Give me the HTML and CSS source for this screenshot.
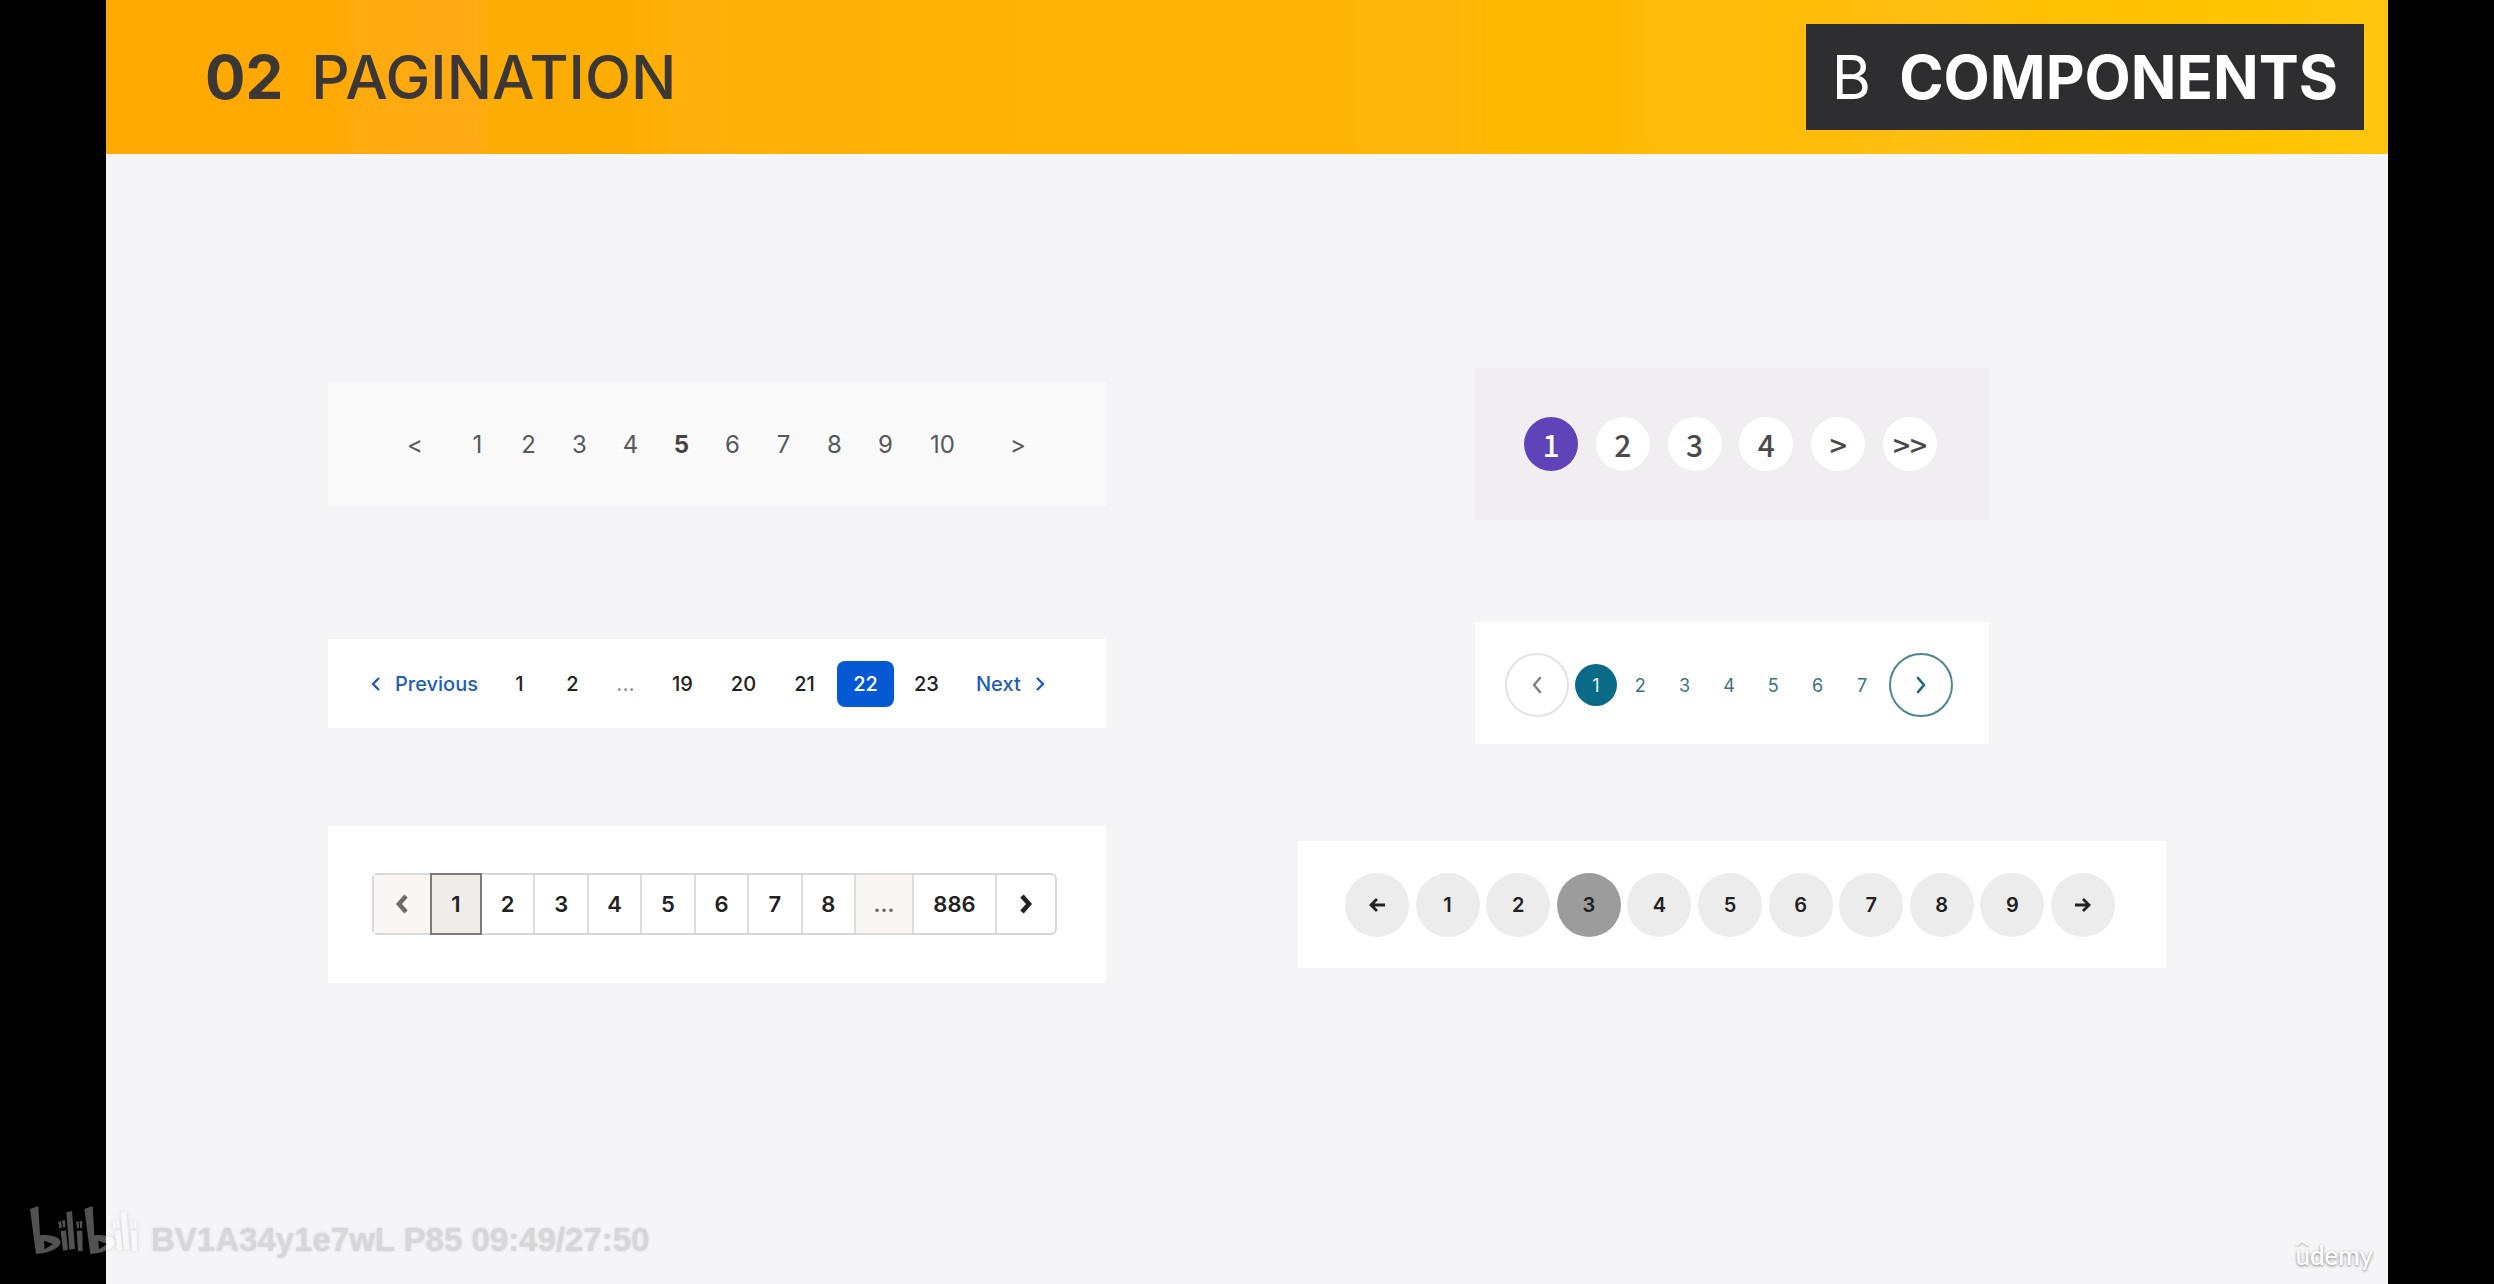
FILE: index.html
```html
<!DOCTYPE html>
<html lang="en">
<head>
<meta charset="utf-8">
<meta name="viewport" content="width=device-width, initial-scale=1">
<title>02 Pagination – Components</title>
<link rel="stylesheet" href="styles.css">
</head>
<body>
<div class="stage">
  <header class="banner">
    <h1 class="banner-title"><strong>02</strong><span>PAGINATION</span></h1>
    <p class="banner-badge"><span>B</span><strong>COMPONENTS</strong></p>
  </header>

  <main class="gallery">
    <nav class="panel plain" aria-label="Plain pagination">
      <a class="plain-arrow" href="#" aria-label="Previous">&lt;</a>
      <a href="#">1</a>
      <a href="#">2</a>
      <a href="#">3</a>
      <a href="#">4</a>
      <a class="current" href="#" aria-current="page">5</a>
      <a href="#">6</a>
      <a href="#">7</a>
      <a href="#">8</a>
      <a href="#">9</a>
      <a class="plain-wide" href="#">10</a>
      <a class="plain-arrow plain-next" href="#" aria-label="Next">&gt;</a>
    </nav>

    <nav class="panel narrow dots" aria-label="Dot pagination">
      <a class="current" href="#" aria-current="page">1</a>
      <a href="#">2</a>
      <a href="#">3</a>
      <a href="#">4</a>
      <a href="#" aria-label="Next">&gt;</a>
      <a href="#" aria-label="Last">&gt;&gt;</a>
    </nav>

    <nav class="panel labelled" aria-label="Labelled pagination">
      <a class="labelled-step" href="#"><svg class="chevron" viewBox="0 0 10 16" aria-hidden="true"><path d="M8 2 2 8l6 6"/></svg>Previous</a>
      <a href="#">1</a>
      <a href="#">2</a>
      <span class="labelled-more">...</span>
      <a class="labelled-two" href="#">19</a>
      <a class="labelled-two" href="#">20</a>
      <a class="labelled-two" href="#">21</a>
      <a class="labelled-two current" href="#" aria-current="page">22</a>
      <a class="labelled-two" href="#">23</a>
      <a class="labelled-step" href="#">Next<svg class="chevron" viewBox="0 0 10 16" aria-hidden="true"><path d="m2 2 6 6-6 6"/></svg></a>
    </nav>

    <nav class="panel narrow rings" aria-label="Ringed pagination">
      <a class="ring ring-off" href="#" aria-label="Previous"><svg viewBox="0 0 12 18" aria-hidden="true"><path d="M9 2 3 9l6 7"/></svg></a>
      <div class="rings-pages">
        <a class="current" href="#" aria-current="page">1</a>
        <a href="#">2</a>
        <a href="#">3</a>
        <a href="#">4</a>
        <a href="#">5</a>
        <a href="#">6</a>
        <a href="#">7</a>
      </div>
      <a class="ring" href="#" aria-label="Next"><svg viewBox="0 0 12 18" aria-hidden="true"><path d="m3 2 6 7-6 7"/></svg></a>
    </nav>

    <nav class="panel segmented" aria-label="Segmented pagination">
      <div class="segments">
        <a class="segment-off" href="#" aria-label="Previous"><svg viewBox="0 0 16 20" aria-hidden="true"><path d="m12 2-7 8 7 8"/></svg></a>
        <a class="current" href="#" aria-current="page">1</a>
        <a href="#">2</a>
        <a href="#">3</a>
        <a href="#">4</a>
        <a href="#">5</a>
        <a href="#">6</a>
        <a href="#">7</a>
        <a href="#">8</a>
        <span class="segment-off">...</span>
        <a href="#">886</a>
        <a href="#" aria-label="Next"><svg viewBox="0 0 16 20" aria-hidden="true"><path d="m4 2 7 8-7 8"/></svg></a>
      </div>
    </nav>

    <nav class="panel discs" aria-label="Disc pagination">
      <a href="#" aria-label="Previous"><svg viewBox="0 0 18 16" aria-hidden="true"><path d="M17 8H3M9 2 3 8l6 6"/></svg></a>
      <a href="#">1</a>
      <a href="#">2</a>
      <a class="current" href="#" aria-current="page">3</a>
      <a href="#">4</a>
      <a href="#">5</a>
      <a href="#">6</a>
      <a href="#">7</a>
      <a href="#">8</a>
      <a href="#">9</a>
      <a href="#" aria-label="Next"><svg viewBox="0 0 18 16" aria-hidden="true"><path d="M1 8h14M9 2l6 6-6 6"/></svg></a>
    </nav>
  </main>
</div>

<div class="source-mark">
  <svg class="source-logo" viewBox="30 45 324 150" role="img" aria-label="bilibili">
    <defs>
      <g id="half">
        <path fill-rule="evenodd" d="M30 57l25-9 5 88c32-4 61 6 62 20 0 18-37 34-74 36ZM72 152l2 26 25-16Z"/>
        <path d="M115 95l8-1 3 19-8 1ZM126 92l9-2 1 22-7 1ZM122 124l16-3 6 58-15 3ZM139 67l17-4 9 113-17 3ZM170 123l17-1 1 61-14 1ZM168 95l8-1 1 20-6 1ZM179 93h8l-1 21-6 1Z"/>
      </g>
    </defs>
    <use href="#half"/>
    <use href="#half" x="163"/>
  </svg>
  <span class="source-text">BV1A34y1e7wL P85 09:49/27:50</span>
</div>
<div class="brand-mark">
  <svg class="brand-hat" viewBox="0 0 14 7" aria-hidden="true"><path d="m1 6 6-4 6 4"/></svg>
  <span>udemy</span>
</div>
</body>
</html>
```
FILE: styles.css
```css
* {
  box-sizing: border-box;
}

body {
  position: relative;
  min-height: 100vh;
  margin: 0;
  padding-inline: 106px;
  background: #000;
  font-family: Inter, "Liberation Sans", sans-serif;
}

a {
  color: inherit;
  text-decoration: none;
}

svg {
  fill: none;
  stroke: currentColor;
}

.stage {
  display: flex;
  flex-direction: column;
  min-height: 100vh;
  background: #f5f5f8;
}

/* Banner */
.banner {
  display: flex;
  align-items: center;
  justify-content: space-between;
  padding: 24px 24px 24px 99px;
  background: linear-gradient(90deg,
    #ffa901 0%, #ffa901 10%, #ffaa0e 11%, #ffaa15 16%, #fdac04 17%,
    #fbad00 23%, #ffb00a 25%, #ffb008 32%, #ffb204 36%, #ffb406 54%,
    #ffb60c 56%, #ffb60c 59%, #fdb900 61%, #ffb902 66%, #ffbc0a 68%,
    #ffbd0a 76%, #ffbe14 80%, #ffc004 84%, #ffc300 94%, #ffc60f 100%);
}

.banner-title,
.banner-badge {
  display: flex;
  margin: 0;
  font-size: 60px;
  line-height: 76px;
}

.banner-title {
  gap: 28px;
  color: #3a3734;
  font-weight: 500;
}

.banner-title strong,
.banner-badge strong {
  font-weight: 700;
}

.banner-badge {
  gap: 28px;
  padding: 15px 26px;
  background: #2e2d2f;
  color: #fff;
}

/* Gallery */
.gallery {
  display: grid;
  grid-template-columns: minmax(0, 778fr) minmax(0, 868fr);
  grid-template-rows: minmax(192px, auto) auto auto;
  gap: 82px 192px;
  align-items: center;
  padding: 194px 222px 100px;
}

.panel {
  display: flex;
  align-items: center;
  justify-content: space-between;
  background: #fff;
}

.panel a,
.panel span {
  display: flex;
  align-items: center;
  justify-content: center;
}

.narrow {
  width: 100%;
  max-width: 514px;
  justify-self: center;
}

/* Plain numbers */
.plain {
  justify-content: flex-start;
  height: 124px;
  padding-left: 50px;
  background: #f9f9fa;
  color: #58585a;
  font-size: 24px;
}

.plain a {
  flex: 0 1 51px;
}

.plain .plain-arrow {
  flex-basis: 74px;
}

.plain .plain-wide {
  flex-basis: 63px;
}

.plain .plain-next {
  flex-basis: 88px;
}

.plain .current {
  color: #444;
  font-weight: 700;
}

/* White dots */
.dots {
  height: 152px;
  padding-inline: 49px 52px;
  background: #f0eef1;
  color: #4a4a4a;
  font-family: "Noto Sans CJK KR", "Noto Sans", sans-serif;
  font-size: 30px;
  font-weight: 500;
  line-height: 54px;
}

.dots a {
  width: 54px;
  height: 54px;
  border-radius: 50%;
  background: #fff;
}

.dots .current {
  background: #5f43b8;
  color: #fff;
}

/* Previous / Next labels */
.labelled {
  justify-content: flex-start;
  gap: 4px;
  height: 89px;
  padding: 2px 0 0 43px;
  color: #222;
  font-size: 20px;
  font-weight: 500;
}

.labelled a,
.labelled-more {
  width: 49px;
  height: 46px;
  border-radius: 8px;
}

.labelled .labelled-two {
  width: 57px;
}

.labelled .current {
  background: #0559d3;
  color: #fff;
}

.labelled-more {
  color: #8c8c8c;
}

.labelled .labelled-step {
  gap: 14px;
  width: auto;
  padding-right: 13px;
  color: #1f5db5;
}

.labelled .labelled-step:last-child {
  padding-inline: 17px 0;
}

.chevron {
  width: 10px;
  height: 16px;
  stroke-width: 2.4;
}

/* Ringed arrows */
.rings {
  gap: 6px;
  height: 122px;
  padding: 4px 36px 0 30px;
  color: #3a7484;
  font-size: 18px;
}

.ring {
  flex: none;
  width: 64px;
  height: 64px;
  border: 2px solid #4d8791;
  border-radius: 50%;
  color: #17677d;
}

.ring svg {
  width: 12px;
  height: 18px;
  stroke-width: 2.6;
  stroke-linecap: round;
  stroke-linejoin: round;
}

.ring-off {
  border-color: #e3e2e5;
  color: #85818c;
}

.rings-pages {
  display: flex;
  flex: 1;
  justify-content: space-between;
}

.rings-pages a {
  width: 42px;
  height: 42px;
  border-radius: 50%;
}

.rings-pages .current {
  background: #0a6b86;
  color: #e6f4f7;
}

/* Segmented bar */
.segmented {
  height: 157px;
  padding: 0 49px 2px 44px;
  color: #222;
  font-size: 22px;
  font-weight: 600;
}

.segments {
  display: grid;
  flex: 1;
  grid-template-columns: 56px 50px repeat(7, 1fr) 58px 83px 60px;
  height: 62px;
  border: 2px solid #d8d7d9;
  border-radius: 6px;
}

.segments > * + * {
  border-left: 2px solid #dddbde;
}

.segments svg {
  width: 16px;
  height: 20px;
  stroke-width: 4.6;
}

.segments .segment-off {
  background: #faf6f4;
  color: #6f6b69;
}

.segments .current {
  z-index: 1;
  margin: -2px -2px -2px 0;
  border: 2px solid #7d7b7e;
  background: #eeedeb;
}

/* Grey discs */
.discs {
  height: 127px;
  padding-inline: 47px 51px;
  color: #222;
  font-size: 20px;
  font-weight: 600;
}

.discs a {
  width: 64px;
  height: 64px;
  border-radius: 50%;
  background: #ececec;
}

.discs .current {
  background: #9c9c9c;
}

.discs svg {
  width: 18px;
  height: 16px;
  stroke-width: 2.8;
}

/* Overlaid marks */
.source-mark {
  position: absolute;
  bottom: 20px;
  left: 30px;
  display: flex;
  align-items: flex-end;
  gap: 13px;
}

.source-logo {
  width: 108px;
  height: 50px;
  margin-bottom: 9px;
  fill: #fff;
  stroke: none;
  opacity: 0.32;
  filter: drop-shadow(0 0 2px rgb(0 0 0 / 40%));
}

.source-text {
  color: #d7d7da;
  font: 700 33px/48px "Liberation Sans", Arial, sans-serif;
  text-shadow: 0 0 3px #d7d7da;
}

.brand-mark {
  position: absolute;
  right: 121px;
  bottom: 13px;
  color: #fff;
  font: 500 26px/32px Lato, sans-serif;
  text-shadow: 0 1px 3px rgb(0 0 0 / 50%);
}

.brand-hat {
  position: absolute;
  top: 0;
  left: 0;
  width: 14px;
  height: 7px;
  stroke-width: 2;
  filter: drop-shadow(0 1px 1px rgb(0 0 0 / 30%));
}
```
